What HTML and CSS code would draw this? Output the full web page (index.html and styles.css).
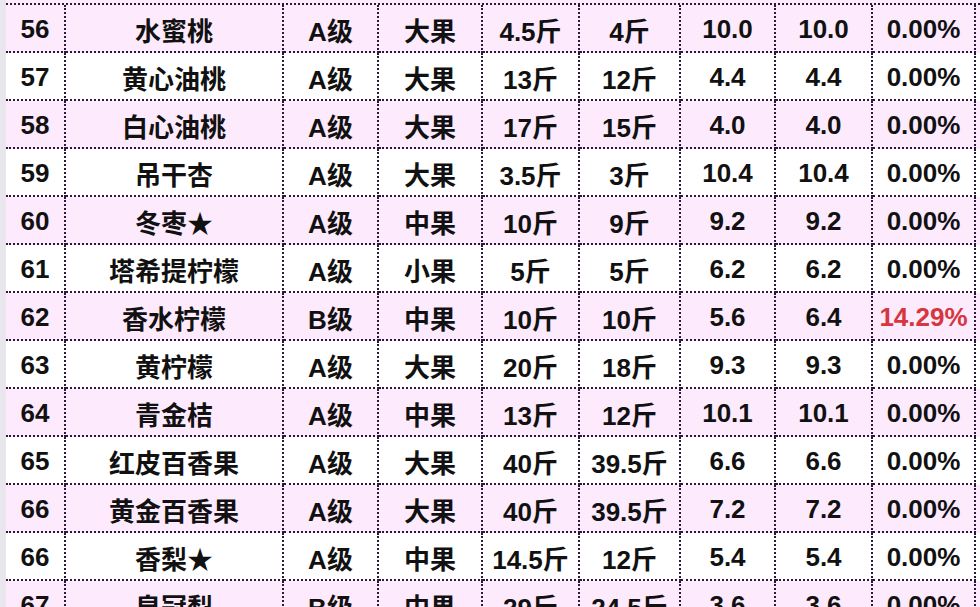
FILE: index.html
```html
<!DOCTYPE html>
<html lang="zh">
<head>
<meta charset="utf-8">
<title>水果价格表</title>
<link rel="stylesheet" href="styles.css">
</head>
<body>
<div class="sheet">
  <div class="table">
    <div class="row pink"><div class="cell">56</div><div class="cell">水蜜桃</div><div class="cell">A级</div><div class="cell">大果</div><div class="cell">4.5斤</div><div class="cell">4斤</div><div class="cell">10.0</div><div class="cell">10.0</div><div class="cell">0.00%</div></div>
    <div class="row"><div class="cell">57</div><div class="cell">黄心油桃</div><div class="cell">A级</div><div class="cell">大果</div><div class="cell">13斤</div><div class="cell">12斤</div><div class="cell">4.4</div><div class="cell">4.4</div><div class="cell">0.00%</div></div>
    <div class="row pink"><div class="cell">58</div><div class="cell">白心油桃</div><div class="cell">A级</div><div class="cell">大果</div><div class="cell">17斤</div><div class="cell">15斤</div><div class="cell">4.0</div><div class="cell">4.0</div><div class="cell">0.00%</div></div>
    <div class="row"><div class="cell">59</div><div class="cell">吊干杏</div><div class="cell">A级</div><div class="cell">大果</div><div class="cell">3.5斤</div><div class="cell">3斤</div><div class="cell">10.4</div><div class="cell">10.4</div><div class="cell">0.00%</div></div>
    <div class="row pink"><div class="cell">60</div><div class="cell">冬枣★</div><div class="cell">A级</div><div class="cell">中果</div><div class="cell">10斤</div><div class="cell">9斤</div><div class="cell">9.2</div><div class="cell">9.2</div><div class="cell">0.00%</div></div>
    <div class="row"><div class="cell">61</div><div class="cell">塔希提柠檬</div><div class="cell">A级</div><div class="cell">小果</div><div class="cell">5斤</div><div class="cell">5斤</div><div class="cell">6.2</div><div class="cell">6.2</div><div class="cell">0.00%</div></div>
    <div class="row pink"><div class="cell">62</div><div class="cell">香水柠檬</div><div class="cell">B级</div><div class="cell">中果</div><div class="cell">10斤</div><div class="cell">10斤</div><div class="cell">5.6</div><div class="cell">6.4</div><div class="cell red">14.29%</div></div>
    <div class="row"><div class="cell">63</div><div class="cell">黄柠檬</div><div class="cell">A级</div><div class="cell">大果</div><div class="cell">20斤</div><div class="cell">18斤</div><div class="cell">9.3</div><div class="cell">9.3</div><div class="cell">0.00%</div></div>
    <div class="row pink"><div class="cell">64</div><div class="cell">青金桔</div><div class="cell">A级</div><div class="cell">中果</div><div class="cell">13斤</div><div class="cell">12斤</div><div class="cell">10.1</div><div class="cell">10.1</div><div class="cell">0.00%</div></div>
    <div class="row"><div class="cell">65</div><div class="cell">红皮百香果</div><div class="cell">A级</div><div class="cell">大果</div><div class="cell">40斤</div><div class="cell">39.5斤</div><div class="cell">6.6</div><div class="cell">6.6</div><div class="cell">0.00%</div></div>
    <div class="row pink"><div class="cell">66</div><div class="cell">黄金百香果</div><div class="cell">A级</div><div class="cell">大果</div><div class="cell">40斤</div><div class="cell">39.5斤</div><div class="cell">7.2</div><div class="cell">7.2</div><div class="cell">0.00%</div></div>
    <div class="row"><div class="cell">66</div><div class="cell">香梨★</div><div class="cell">A级</div><div class="cell">中果</div><div class="cell">14.5斤</div><div class="cell">12斤</div><div class="cell">5.4</div><div class="cell">5.4</div><div class="cell">0.00%</div></div>
    <div class="row pink"><div class="cell">67</div><div class="cell">皇冠梨</div><div class="cell">B级</div><div class="cell">中果</div><div class="cell">29斤</div><div class="cell">24.5斤</div><div class="cell">3.6</div><div class="cell">3.6</div><div class="cell">0.00%</div></div>
  </div>
</div>
</body>
</html>
```

FILE: styles.css
```css
html, body {
  margin: 0;
  padding: 0;
  height: 100%;
  overflow: hidden;
  background: #e9e6ee;
}

.sheet {
  padding-left: 6px;
  background: #e9e6ee;
}

.table {
  background: #fdeafd;
  padding-top: 3px;
}

.row {
  display: grid;
  grid-template-columns: 60px 218px 95px 104px 97px 101px 95px 97px 103px 1fr;
  height: 48px;
  background: #ffffff;
}

.row:first-child {
  border-top: 2px dotted #2c1838;
}

.row.pink {
  background: #fdeafd;
}

.cell {
  box-sizing: border-box;
  border-right: 2px dotted #2c1838;
  border-bottom: 2px dotted #2c1838;
  display: flex;
  align-items: center;
  justify-content: center;
  padding-top: 2px;
  font-family: "Liberation Sans", "Noto Sans CJK SC", sans-serif;
  font-weight: bold;
  font-size: 26px;
  color: #111111;
  white-space: nowrap;
}

.cell.red {
  color: #d6363e;
}
```
